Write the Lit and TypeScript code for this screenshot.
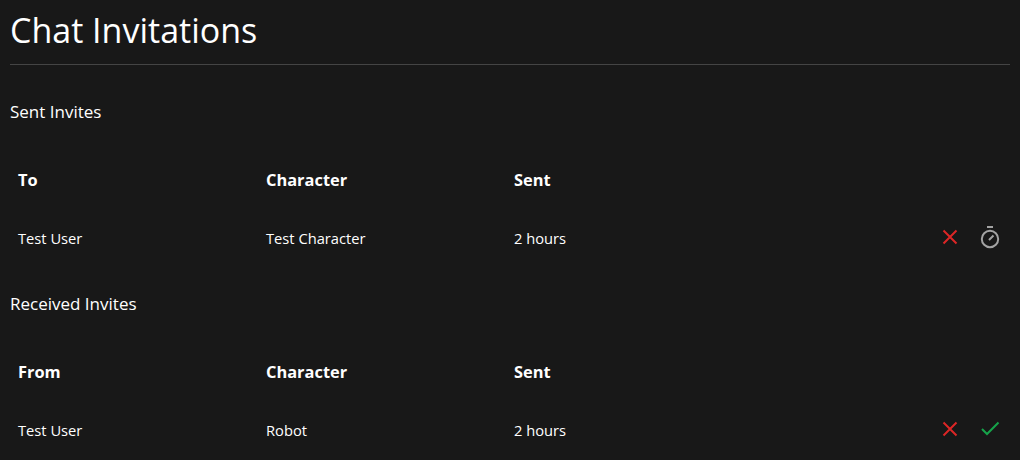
import { LitElement, html, css, svg } from 'lit';
import { customElement } from 'lit/decorators.js';

const sent = [{ who: 'Test User', character: 'Test Character', when: '2 hours' }];
const received = [{ who: 'Test User', character: 'Robot', when: '2 hours' }];

const icon = (cls: string, body: unknown) => html`
  <svg class="icon ${cls}" viewBox="0 0 24 24" width="24" height="24" fill="none" stroke="currentColor" stroke-width="2">${body}</svg>
`;

const cross = () => icon('red', svg`<path d="M5.5 5.5l13 13M18.5 5.5l-13 13" />`);
const check = () => icon('green', svg`<path d="M4 12l5 5L20.5 5.5" />`);
const timer = () => icon('grey', svg`
  <circle cx="12" cy="14" r="8.2" />
  <path d="M9 2h6M11 15l4.5-4.5" />
`);

@customElement('app-root')
export class AppRoot extends LitElement {
  static styles = css`
    :host {
      background: #181818;
      color: #fff;
      display: block;
      font-family: 'Open Sans', 'Noto Sans', sans-serif;
      height: 460px;
      overflow: hidden;
      padding: 0 10px;
      box-sizing: border-box;
    }

    h1 {
      font-size: 34px;
      font-weight: 400;
      line-height: 44px;
      margin: 0;
      padding: 8px 0 12px;
      border-bottom: 1px solid #444;
    }

    h2 {
      font-size: 17px;
      font-weight: 400;
      line-height: 24px;
      margin: 0;
    }

    .first {
      margin-top: 35px;
    }

    table {
      border-collapse: collapse;
      margin-top: 35px;
      width: 100%;
      table-layout: fixed;
      margin-bottom: 15px;
    }

    col.name,
    col.character,
    col.sent {
      width: 248px;
    }

    th,
    td {
      padding: 0 8px;
      text-align: left;
    }

    th {
      font-size: 16.4px;
      font-weight: 700;
      height: 40px;
    }

    td {
      font-size: 14.7px;
      height: 78px;
    }

    .actions {
      display: flex;
      justify-content: flex-end;
      gap: 16px;
      margin-bottom: 2px;
    }

    .icon {
      display: block;
    }

    .red {
      color: #dc2626;
    }

    .green {
      color: #16a34a;
    }

    .grey {
      color: #a3a3a3;
    }
  `;

  renderTable(label: string, rows: typeof sent, actions: () => unknown) {
    return html`
      <table>
        <colgroup>
          <col class="name" />
          <col class="character" />
          <col class="sent" />
          <col />
        </colgroup>
        <thead>
          <tr><th>${label}</th><th>Character</th><th>Sent</th><th></th></tr>
        </thead>
        <tbody>
          ${rows.map(r => html`
            <tr>
              <td>${r.who}</td>
              <td>${r.character}</td>
              <td>${r.when}</td>
              <td><div class="actions">${actions()}</div></td>
            </tr>
          `)}
        </tbody>
      </table>
    `;
  }

  render() {
    return html`
      <h1>Chat Invitations</h1>
      <h2 class="first">Sent Invites</h2>
      ${this.renderTable('To', sent, () => html`${cross()}${timer()}`)}
      <h2>Received Invites</h2>
      ${this.renderTable('From', received, () => html`${cross()}${check()}`)}
    `;
  }
}
